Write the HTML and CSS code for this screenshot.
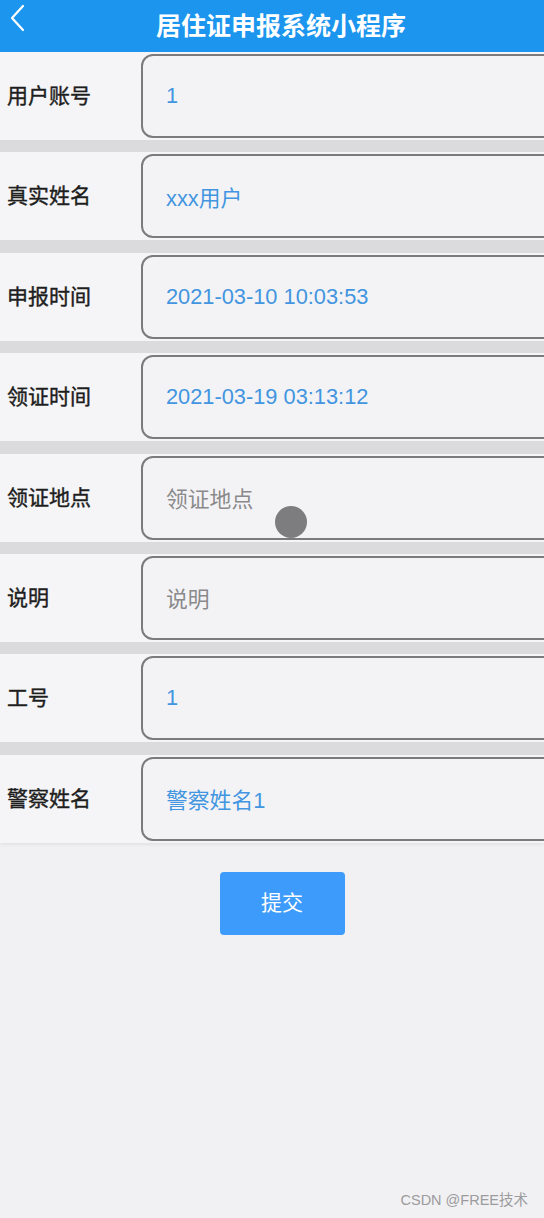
FILE: index.html
```html
<!DOCTYPE html>
<html lang="zh-CN">
<head>
    <meta charset="UTF-8">
    <meta name="viewport" content="width=device-width, initial-scale=1.0">
    <title>居住证申报系统小程序</title>
    <link rel="stylesheet" href="styles.css">
</head>
<body>
    <div class="header">
        <span class="back">
            <svg width="18" height="28" viewBox="0 0 18 28"><path d="M15 2 L4 14 L15 26" fill="none" stroke="#fff" stroke-width="2.2" stroke-linecap="round" stroke-linejoin="round"/></svg>
        </span>
        <h1 class="title">居住证申报系统小程序</h1>
    </div>

    <div class="form">
        <div class="row">
            <div class="label">用户账号</div>
            <div class="field">1</div>
        </div>
        <div class="row">
            <div class="label">真实姓名</div>
            <div class="field">xxx用户</div>
        </div>
        <div class="row">
            <div class="label">申报时间</div>
            <div class="field">2021-03-10 10:03:53</div>
        </div>
        <div class="row">
            <div class="label">领证时间</div>
            <div class="field">2021-03-19 03:13:12</div>
        </div>
        <div class="row">
            <div class="label">领证地点</div>
            <div class="field placeholder">领证地点</div>
        </div>
        <div class="row">
            <div class="label">说明</div>
            <div class="field placeholder">说明</div>
        </div>
        <div class="row">
            <div class="label">工号</div>
            <div class="field">1</div>
        </div>
        <div class="row">
            <div class="label">警察姓名</div>
            <div class="field">警察姓名1</div>
        </div>
    </div>

    <div class="actions">
        <button class="submit">提交</button>
    </div>

    <div class="touch-dot"></div>
    <div class="watermark">CSDN @FREE技术</div>
</body>
</html>
```

FILE: styles.css
```css
html, body {
    margin: 0;
    padding: 0;
}

body {
    position: relative;
    width: 544px;
    min-height: 1218px;
    overflow: hidden;
    background: #f1f0f3;
    font-family: "Liberation Sans", Arial, "Noto Sans CJK SC", sans-serif;
}

.header {
    position: relative;
    height: 52px;
    background: #1b95ee;
    display: flex;
    align-items: center;
    justify-content: center;
}

.back {
    position: absolute;
    left: 8px;
    top: 4px;
}

.title {
    margin: 0 0 4px 18px;
    color: #fff;
    font-size: 25px;
    font-weight: bold;
}

.form {
    display: flex;
    flex-direction: column;
    gap: 12.4px;
    background: #dbdadc;
    box-shadow: 0 2px 3px rgba(0,0,0,0.06);
}

.row {
    height: 88px;
    display: flex;
    align-items: center;
    background: #f5f5f7;
}

.label {
    width: 141px;
    flex: none;
    box-sizing: border-box;
    padding: 0 0 4px 7px;
    font-size: 21px;
    color: #1e1e1e;
    -webkit-text-stroke: 0.4px #1e1e1e;
}

.field {
    flex: 1;
    height: 84px;
    margin-right: -20px;
    box-sizing: border-box;
    border: 2px solid #7b7b7d;
    border-radius: 12px;
    background: #f3f3f5;
    display: flex;
    align-items: center;
    padding-left: 23px;
    font-size: 21.8px;
    color: #4295e0;
}

.field.placeholder {
    color: #8a8a8c;
}

.actions {
    display: flex;
    justify-content: center;
    padding: 29px 0 0 20px;
}

.submit {
    width: 125px;
    height: 63px;
    border: none;
    border-radius: 4px;
    background: #3d9cfb;
    color: #fff;
    font-family: inherit;
    font-size: 21px;
    padding-bottom: 6px;
}

.touch-dot {
    position: absolute;
    left: 275px;
    top: 506px;
    width: 32px;
    height: 32px;
    border-radius: 50%;
    background: rgba(112,112,114,0.9);
}

.watermark {
    position: absolute;
    right: 16px;
    bottom: 9px;
    font-size: 14.5px;
    color: #9c9c9e;
}
```
